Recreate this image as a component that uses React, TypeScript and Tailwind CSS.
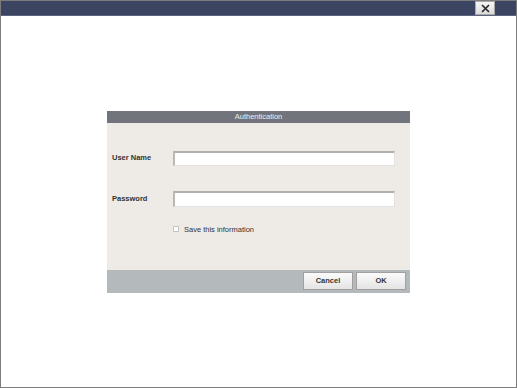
import React from "react";

export default function App() {
  return (
    <div className="w-[517px] h-[388px] border border-[#7c7c7c] bg-white flex flex-col overflow-hidden" style={{ fontFamily: '"Liberation Sans", Arial, sans-serif' }}>
      <div className="h-[15px] bg-[#3b4461] border-b border-[#5b6480] flex items-start justify-end pr-[21px] shrink-0">
        <button className="w-[20px] h-[14px] bg-gradient-to-b from-[#f6f6f6] to-[#dcdcdc] border border-[#a8a8a8] flex items-center justify-center">
          <svg width="9" height="9" viewBox="0 0 9 9">
            <path d="M1 1L8 8M8 1L1 8" stroke="#2a2a2a" strokeWidth="1.7" />
          </svg>
        </button>
      </div>
      <div className="flex-1 flex items-center justify-center">
        <div className="w-[303px] flex flex-col">
          <div className="h-[12px] bg-[#71757b] text-[#ececec] text-[7.5px] flex items-center justify-center">Authentication</div>
          <div className="h-[147px] bg-[#eeebe6] flex flex-col pt-[28px]">
            <div className="flex items-center h-[15px]">
              <div className="w-[66px] pl-[5px] text-[7.5px] font-semibold text-[#333]">User Name</div>
              <div className="w-[222px] h-[15px] bg-white border-t-2 border-l-2 border-t-[#b0b0b0] border-l-[#b8b8b8] border-r border-b border-r-[#e2e2e2] border-b-[#e2e2e2]" />
            </div>
            <div className="flex items-center h-[16px] mt-[25px]">
              <div className="w-[66px] pl-[5px] text-[7.5px] font-semibold text-[#333]">Password</div>
              <div className="w-[222px] h-[16px] bg-white border-t-2 border-l-2 border-t-[#b0b0b0] border-l-[#b8b8b8] border-r border-b border-r-[#e2e2e2] border-b-[#e2e2e2]" />
            </div>
            <div className="flex items-center mt-[17px] pl-[66px] gap-[5px]">
              <div className="w-[6px] h-[6px] border border-[#c4c4c4] bg-white" />
              <span className="text-[7.5px] text-[#333]">Save this information</span>
            </div>
          </div>
          <div className="h-[23px] bg-[#b4b9bc] flex items-center justify-end gap-[3px] pr-[4px]">
            <button className="w-[50px] h-[18px] bg-gradient-to-b from-[#fbfbfb] to-[#e4e4e4] border border-[#a0a0a0] text-[7.5px] font-semibold text-[#333]">Cancel</button>
            <button className="w-[50px] h-[18px] bg-gradient-to-b from-[#fbfbfb] to-[#e4e4e4] border border-[#a0a0a0] text-[7.5px] font-semibold text-[#333]">OK</button>
          </div>
        </div>
      </div>
    </div>
  );
}
